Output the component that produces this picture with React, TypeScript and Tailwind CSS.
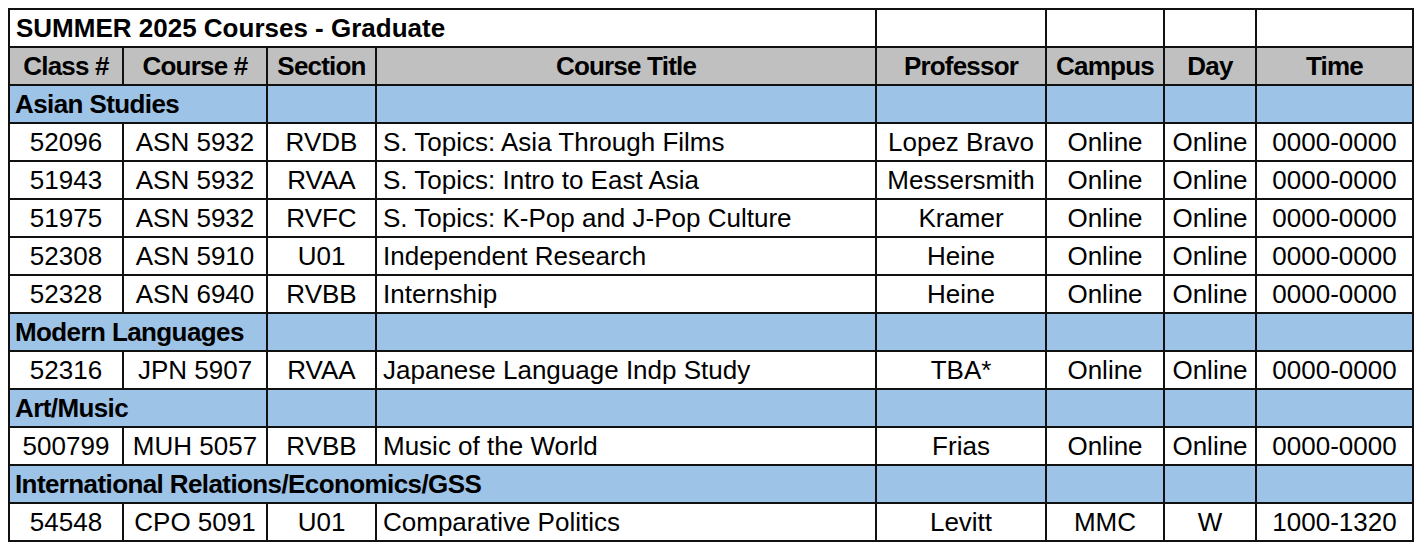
type Course = {
  cls: string;
  course: string;
  section: string;
  title: string;
  prof: string;
  campus: string;
  day: string;
  time: string;
};

type Group = {
  name: string;
  span: number;
  rows: Course[];
};

const online = (cls: string, course: string, section: string, title: string, prof: string): Course => ({
  cls,
  course,
  section,
  title,
  prof,
  campus: "Online",
  day: "Online",
  time: "0000-0000",
});

const groups: Group[] = [
  {
    name: "Asian Studies",
    span: 2,
    rows: [
      online("52096", "ASN 5932", "RVDB", "S. Topics: Asia Through Films", "Lopez Bravo"),
      online("51943", "ASN 5932", "RVAA", "S. Topics: Intro to East Asia", "Messersmith"),
      online("51975", "ASN 5932", "RVFC", "S. Topics: K-Pop and J-Pop Culture", "Kramer"),
      online("52308", "ASN 5910", "U01", "Independent Research", "Heine"),
      online("52328", "ASN 6940", "RVBB", "Internship", "Heine"),
    ],
  },
  {
    name: "Modern Languages",
    span: 2,
    rows: [online("52316", "JPN 5907", "RVAA", "Japanese Language Indp Study", "TBA*")],
  },
  {
    name: "Art/Music",
    span: 2,
    rows: [online("500799", "MUH 5057", "RVBB", "Music of the World", "Frias")],
  },
  {
    name: "International Relations/Economics/GSS",
    span: 4,
    rows: [
      {
        cls: "54548",
        course: "CPO 5091",
        section: "U01",
        title: "Comparative Politics",
        prof: "Levitt",
        campus: "MMC",
        day: "W",
        time: "1000-1320",
      },
    ],
  },
];

const headers = ["Class #", "Course #", "Section", "Course Title", "Professor", "Campus", "Day", "Time"];
const widths = [114, 144, 109, 500, 170, 118, 92, 157];

const cell = "border-2 border-[#111] h-[38px] p-0 leading-none whitespace-nowrap overflow-visible";

export default function App() {
  return (
    <div className="bg-white w-[1428px] h-[553px] pt-[8px] pl-[8px] text-black font-['Liberation_Sans',Arial,sans-serif]">
      <table className="table-fixed border-collapse text-[26px]">
        <colgroup>
          {widths.map((w, i) => (
            <col key={i} style={{ width: w }} />
          ))}
        </colgroup>
        <tbody>
          <tr>
            <td colSpan={4} className={`${cell} font-bold tracking-[0px] text-left pl-[6px]`}>
              SUMMER 2025 Courses - Graduate
            </td>
            <td className={cell} />
            <td className={cell} />
            <td className={cell} />
            <td className={cell} />
          </tr>
          <tr className="bg-[#c0c0c0]">
            {headers.map((h) => (
              <td key={h} className={`${cell} font-bold tracking-[-0.8px] text-center`}>
                {h}
              </td>
            ))}
          </tr>
          {groups.map((g) => (
            <GroupRows key={g.name} group={g} />
          ))}
        </tbody>
      </table>
    </div>
  );
}

function GroupRows({ group }: { group: Group }) {
  const rest = 8 - group.span;
  return (
    <>
      <tr className="bg-[#9dc3e6]">
        <td colSpan={group.span} className={`${cell} font-bold tracking-[-0.6px] text-left pl-[5px]`}>
          {group.name}
        </td>
        {Array.from({ length: rest }).map((_, i) => (
          <td key={i} className={cell} />
        ))}
      </tr>
      {group.rows.map((r) => (
        <tr key={r.cls} className="bg-white">
          <td className={`${cell} text-center`}>{r.cls}</td>
          <td className={`${cell} text-center`}>{r.course}</td>
          <td className={`${cell} text-center`}>{r.section}</td>
          <td className={`${cell} text-left pl-[6px]`}>{r.title}</td>
          <td className={`${cell} text-center`}>{r.prof}</td>
          <td className={`${cell} text-center`}>{r.campus}</td>
          <td className={`${cell} text-center`}>{r.day}</td>
          <td className={`${cell} text-center`}>{r.time}</td>
        </tr>
      ))}
    </>
  );
}
